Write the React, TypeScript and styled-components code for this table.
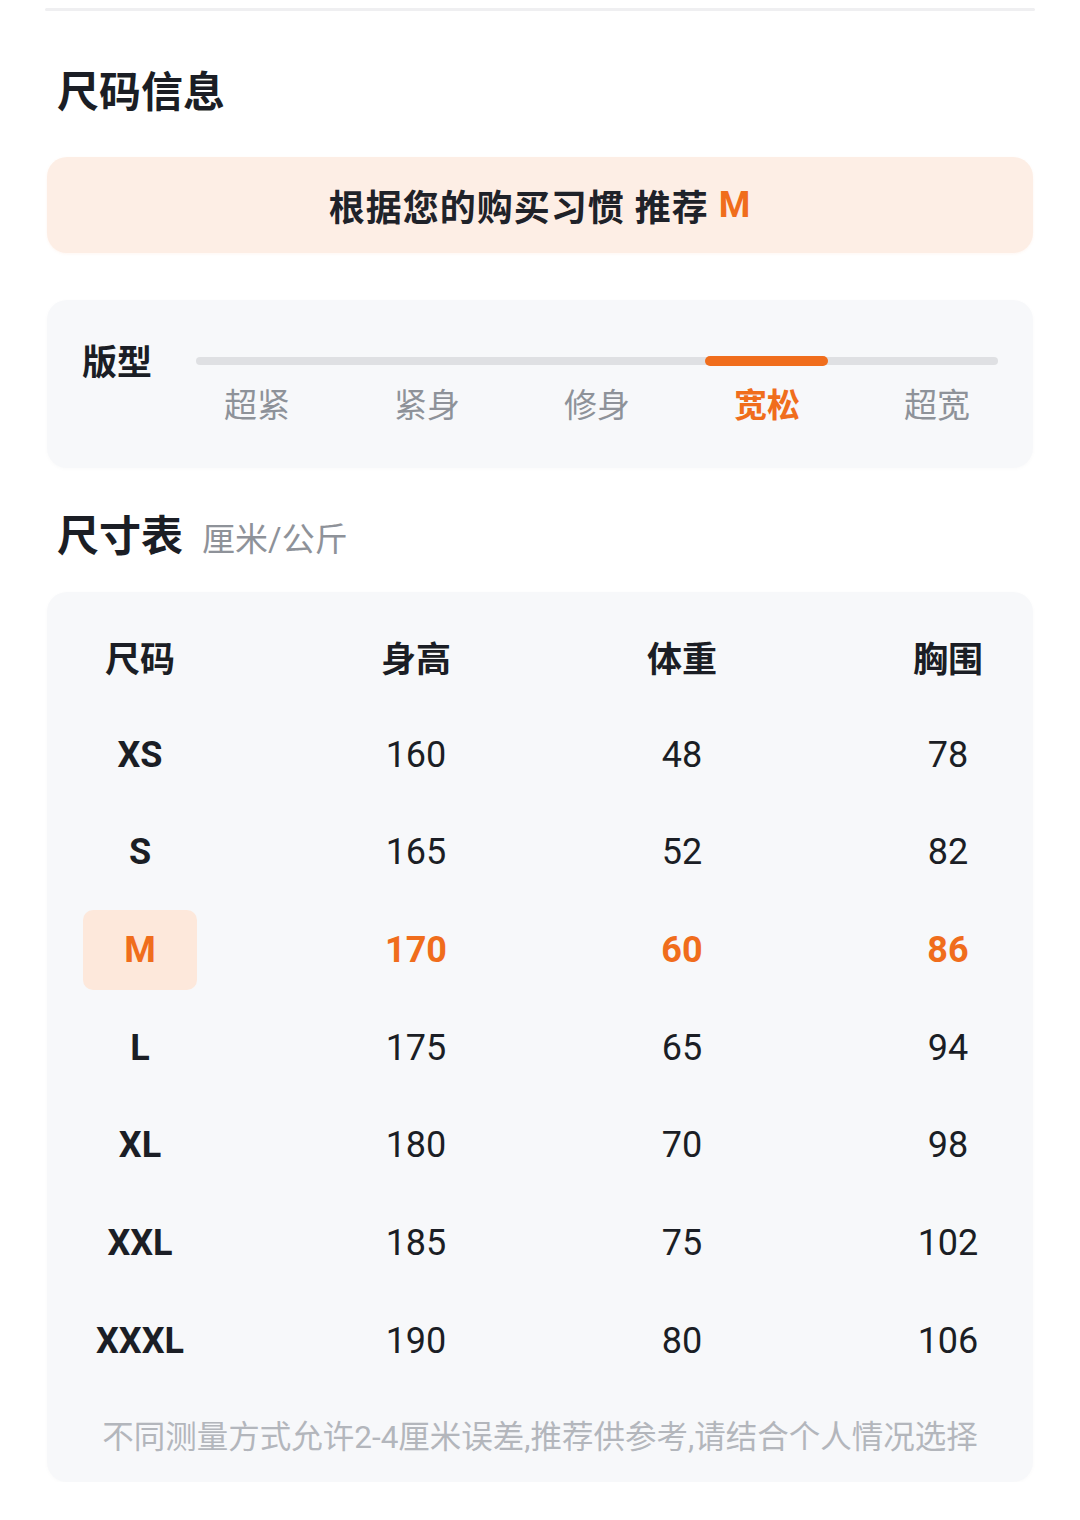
import React from "react";
import styled, { createGlobalStyle } from "styled-components";

const GlobalStyle = createGlobalStyle`
  body {
    margin: 0;
    background: #ffffff;
    font-family: Roboto, "Noto Sans CJK SC", sans-serif;
    color: #1b1e25;
  }
`;

const ORANGE = "#f06d1c";

const Page = styled.div`
  width: 1080px;
  padding: 8px 47px 0;
  box-sizing: border-box;
`;

const TopEdge = styled.div`
  height: 3px;
  margin: 0 -2px;
  border-radius: 2px;
  background: #efeff1;
`;

const SectionTitle = styled.div<{ $top: number }>`
  display: flex;
  align-items: baseline;
  gap: 19px;
  margin-top: ${(p) => p.$top}px;
  padding-left: 10px;
  font-size: 42px;
  line-height: 42px;
  font-weight: 700;
  color: #1b1e25;
`;

const Unit = styled.span`
  font-size: 33px;
  font-weight: 400;
  color: #8e9299;
`;

const Banner = styled.div`
  margin-top: 43px;
  height: 96px;
  border-radius: 20px;
  background: #fdeee5;
  box-shadow: 0 1px 3px rgba(240, 140, 90, 0.08);
  display: flex;
  align-items: center;
  justify-content: center;
  font-size: 36px;
  letter-spacing: 1px;
  font-weight: 700;
  color: #1f2229;
  white-space: pre;
`;

const Accent = styled.span`
  color: ${ORANGE};
`;

const Card = styled.div`
  background: #f7f8fa;
  border-radius: 20px;
  box-shadow: 0 1px 4px rgba(0, 0, 0, 0.025);
`;

const FitCard = styled(Card)`
  margin-top: 47px;
  padding: 46px 11px 46px 35px;
  display: flex;
  align-items: flex-start;
`;

const FitLabel = styled.div`
  width: 90px;
  flex: none;
  font-size: 35px;
  line-height: 35px;
  font-weight: 700;
`;

const Slider = styled.div`
  width: 850px;
`;

const Track = styled.div`
  position: relative;
  height: 8px;
  margin: 11px 24px 0;
  border-radius: 4px;
  background: #dfe0e3;
`;

const Thumb = styled.div`
  position: absolute;
  top: -1px;
  width: 123px;
  height: 10px;
  border-radius: 5px;
  background: ${ORANGE};
`;

const FitOptions = styled.div`
  margin-top: 24px;
  display: grid;
  grid-template-columns: repeat(5, 1fr);
`;

const FitOption = styled.div<{ $active?: boolean }>`
  text-align: center;
  font-size: 33px;
  line-height: 33px;
  font-weight: ${(p) => (p.$active ? 700 : 400)};
  color: ${(p) => (p.$active ? ORANGE : "#8e9299")};
`;

const TableCard = styled(Card)`
  margin-top: 31px;
  padding: 16px 0 24px;
`;

const Table = styled.div`
  display: grid;
  grid-template-columns: 114px 94px 94px 94px;
  grid-auto-rows: 97.7px;
  justify-content: space-between;
  padding: 0 38px 0 36px;
`;

const Cell = styled.div<{ $head?: boolean; $hot?: boolean; $size?: boolean }>`
  display: flex;
  align-items: center;
  justify-content: center;
  white-space: nowrap;
  font-size: ${(p) => (p.$head ? 35 : 36)}px;
  font-weight: ${(p) => (p.$head || p.$size || p.$hot ? 700 : 400)};
  color: ${(p) => (p.$hot ? ORANGE : "#1b1e25")};
`;

const SizeBadge = styled.span<{ $hot?: boolean }>`
  width: 114px;
  height: 80px;
  border-radius: 10px;
  display: flex;
  align-items: center;
  justify-content: center;
  background: ${(p) => (p.$hot ? "#fde8db" : "transparent")};
`;

const Note = styled.div`
  margin-top: 28px;
  text-align: center;
  font-size: 31.5px;
  line-height: 40px;
  color: #b3b6bc;
`;

const fits = ["超紧", "紧身", "修身", "宽松", "超宽"];
const activeFit = 3;

const rows = [
  ["XS", "160", "48", "78"],
  ["S", "165", "52", "82"],
  ["M", "170", "60", "86"],
  ["L", "175", "65", "94"],
  ["XL", "180", "70", "98"],
  ["XXL", "185", "75", "102"],
  ["XXXL", "190", "80", "106"],
];
const recommended = "M";

export default function App() {
  return (
    <>
      <GlobalStyle />
      <Page>
        <TopEdge />
        <SectionTitle $top={61}>尺码信息</SectionTitle>
        <Banner>
          根据您的购买习惯 推荐 <Accent>{recommended}</Accent>
        </Banner>

        <FitCard>
          <FitLabel>版型</FitLabel>
          <Slider>
            <Track>
              <Thumb style={{ left: activeFit * 170 - 1 }} />
            </Track>
            <FitOptions>
              {fits.map((f, i) => (
                <FitOption key={f} $active={i === activeFit}>
                  {f}
                </FitOption>
              ))}
            </FitOptions>
          </Slider>
        </FitCard>

        <SectionTitle $top={48}>
          尺寸表<Unit>厘米/公斤</Unit>
        </SectionTitle>

        <TableCard>
          <Table>
            {["尺码", "身高", "体重", "胸围"].map((h) => (
              <Cell key={h} $head>
                {h}
              </Cell>
            ))}
            {rows.map((r) => {
              const hot = r[0] === recommended;
              return (
                <React.Fragment key={r[0]}>
                  <Cell $size $hot={hot}>
                    <SizeBadge $hot={hot}>{r[0]}</SizeBadge>
                  </Cell>
                  <Cell $hot={hot}>{r[1]}</Cell>
                  <Cell $hot={hot}>{r[2]}</Cell>
                  <Cell $hot={hot}>{r[3]}</Cell>
                </React.Fragment>
              );
            })}
          </Table>
          <Note>不同测量方式允许2-4厘米误差,推荐供参考,请结合个人情况选择</Note>
        </TableCard>
      </Page>
    </>
  );
}
